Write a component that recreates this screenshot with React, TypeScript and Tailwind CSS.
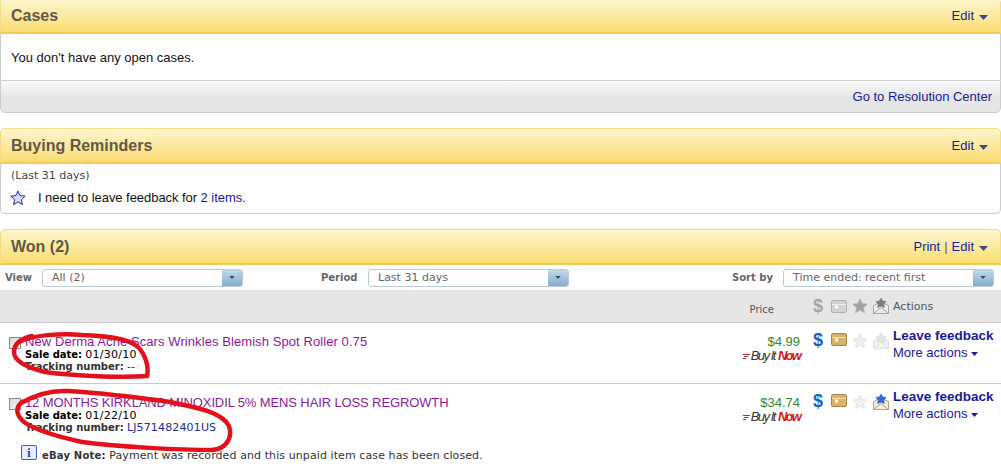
const arial = "font-['Liberation_Sans',Arial,sans-serif]";
const verdana = "font-['DejaVu_Sans',Verdana,sans-serif]";

function Caret({ className = "" }: { className?: string }) {
  return (
    <svg width="9" height="5" viewBox="0 0 9 5" className={className}>
      <path d="M0 0h9L4.5 5z" fill="currentColor" />
    </svg>
  );
}

function PanelHeader({ title, print }: { title: string; print?: boolean }) {
  return (
    <div className="flex h-[36px] items-center justify-between rounded-t-[5px] border border-b-2 border-[#f5dc84] border-b-[#efca58] bg-gradient-to-b from-[#fdf5cc] to-[#fbdd70] pt-[1px] pr-[12px] pl-[10px]">
      <h2 className="text-base font-bold text-[#5f5a48]">{title}</h2>
      <div className="flex items-center text-[13px] text-[#1a1a9c]">
        {print && (
          <>
            <span>Print</span>
            <span className="mx-[4px] text-[#5f5a48]">|</span>
          </>
        )}
        <span>Edit</span>
        <Caret className="mt-[2px] ml-[5px] text-[#44448c]" />
      </div>
    </div>
  );
}

function Star({ fill, stroke }: { fill: string; stroke: string }) {
  return (
    <svg width="16" height="16" viewBox="0 0 16 16" className="shrink-0">
      <path
        d="M8 1l2.100 4.600 5 .6-3.700 3.400 1 5L8 11.900 3.600 14.600l1-5L.9 6.200l5-.6z"
        fill={fill}
        stroke={stroke}
        strokeLinejoin="round"
      />
    </svg>
  );
}

function BoxIcon({ gray }: { gray?: boolean }) {
  return (
    <svg width="16" height="13" viewBox="0 0 16 13" className="shrink-0">
      <rect x=".5" y=".5" width="15" height="12" rx="1.500" fill={gray ? "#d2d2d2" : "#d9b36a"} stroke={gray ? "#b0b0b0" : "#a98443"} />
      <path d="M1 4.500h14" stroke={gray ? "#f0f0f0" : "#f2dca8"} />
      <path d="M4 5.500h3v3H4z" fill="#fff" />
    </svg>
  );
}

function MailStar({ fill, stroke, body, edge }: { fill: string; stroke: string; body: string; edge: string }) {
  return (
    <svg width="16" height="16" viewBox="0 0 16 16" className="shrink-0">
      <path d="M.5 7.500L8 4l7.500 3.500v8H.5z" fill={body} stroke={edge} />
      <path d="M3 3.500l3.300-.4L8 .2l1.700 2.900 3.300.4-2.300 2.600.6 3.300L8 8 4.700 9.400l.6-3.300z" fill={fill} stroke={stroke} strokeWidth=".7" />
      <path d="M.5 15.500L8 9.500l7.500 6" fill="none" stroke={edge} />
    </svg>
  );
}

function Select({ label, value, labelW, width, className = "" }: { label: string; value: string; labelW: string; width: string; className?: string }) {
  return (
    <div className={`flex items-center ${className}`}>
      <span className={`${verdana} ${labelW} text-[10px] font-bold text-[#666]`}>{label}</span>
      <div className={`${width} flex h-[18px] items-stretch overflow-hidden rounded-[3px] border border-[#bcc8d6] bg-white`}>
        <span className={`${verdana} flex-1 pl-[9px] text-[11px] leading-[16px] text-[#666]`}>{value}</span>
        <span className="flex w-5 items-center justify-center bg-gradient-to-b from-[#c4d8e8] to-[#82add0] text-[#3c4a5c]">
          <Caret className="h-[3px] w-[6px]" />
        </span>
      </div>
    </div>
  );
}

function BuyItNow() {
  return (
    <div className={`${arial} flex items-center justify-end text-[13px] leading-[14px] italic`}>
      <span className="mr-[1px] flex flex-col gap-[1px]">
        <span className="h-px w-[7px] bg-[#b02525]" />
        <span className="ml-[1px] h-px w-[4px] bg-[#b02525]" />
        <span className="h-px w-[3px] bg-[#b02525]" />
      </span>
      <span className="tracking-[-1.500px] text-[#333]">Buy It</span>
      <span className="ml-[3px] font-bold tracking-[-1.800px] text-[#d31717]">Now</span>
    </div>
  );
}

type Order = {
  title: string;
  titleTracking: string;
  date: string;
  tracking: string;
  price: string;
  done?: boolean;
  note?: boolean;
  height: string;
};

const orders: Order[] = [
  { title: "New Derma Acne Scars Wrinkles Blemish Spot Roller 0.75", titleTracking: "tracking-[.08px]", date: "01/30/10", tracking: "--", price: "$4.99", height: "h-[61px]" },
  { title: "12 MONTHS KIRKLAND MINOXIDIL 5% MENS HAIR LOSS REGROWTH", titleTracking: "tracking-[-.12px]", date: "01/22/10", tracking: "LJ571482401US", price: "$34.74", done: true, note: true, height: "h-[88px]" },
];

function OrderRow({ order }: { order: Order }) {
  return (
    <div className={`${order.height} border-b border-[#ccc] pt-[4px] last:border-b-0`}>
      <div className="flex items-start">
        <span className="mt-[10px] ml-[9px] h-[12px] w-[12px] shrink-0 border border-[#8a8a8a] bg-gradient-to-br from-[#d8d8d8] to-[#f8f8f8]" />
        <div className="ml-[4px] flex-1 pt-[7px]">
          <div className={`text-[13px] leading-[15px] ${order.titleTracking} text-[#8b1a9b]`}>{order.title}</div>
          <div className={`${verdana} text-[10px] leading-[12px] text-black`}>
            <div>
              <b>Sale date:</b> <span className="text-[11px] tracking-[.25px]">{order.date}</span>
            </div>
            <div className="text-[#333]">
              <b>Tracking number:</b>{" "}
              <span className={`text-[11px] tracking-[.15px] ${order.tracking === "--" ? "" : "text-[#1a2ca0]"}`}>{order.tracking}</span>
            </div>
          </div>
        </div>
        <div className="w-[92px] pt-[7px] text-right">
          <div className="text-[13px] leading-[15px] text-[#2b8a2b]">{order.price}</div>
          <BuyItNow />
        </div>
        <div className="ml-[13px] flex w-[80px] items-start pt-[5px]">
          <span className="w-[10px] text-center text-[18px] leading-[17px] font-bold text-[#1f5fc4]">$</span>
          <span className="mt-[1px] ml-[8px] flex">
            <BoxIcon />
          </span>
          <span className="mt-[1px] ml-[5px] flex">
            <Star fill="#efefef" stroke="#e2e2e2" />
          </span>
          <span className="mt-[1px] ml-[5px] flex">
            {order.done ? (
              <MailStar fill="#2f6fd0" stroke="#1f55b5" body="#f4eed8" edge="#a5a58c" />
            ) : (
              <MailStar fill="#e6e6e6" stroke="#d6d6d6" body="#f2f2f2" edge="#e2e2e2" />
            )}
          </span>
        </div>
        <div className="w-[108px]">
          <div className="text-[13.500px] leading-[17px] font-bold text-[#1a1a9c]">Leave feedback</div>
          <div className="flex items-center text-[13px] leading-[17px] text-[#1a1a9c]">
            More actions
            <Caret className="mt-[2px] ml-[4px] h-[4px] w-[7px] text-[#1a1a9c]" />
          </div>
        </div>
      </div>
      {order.note && (
        <div className="mt-[11px] ml-[21px] flex items-start gap-[5px]">
          <span className="flex h-[15px] w-[16px] items-center justify-center rounded-[2px] border border-[#3a5fc0] bg-[#e6eefb] font-['Liberation_Serif',serif] text-xs font-bold text-[#1f3fa8]">i</span>
          <span className={`${verdana} mt-[4px] text-[11px] leading-[14px] tracking-[.09px] text-[#333]`}>
            <b className="text-[10px] tracking-[.2px]">eBay Note:</b> Payment was recorded and this unpaid item case has been closed.
          </span>
        </div>
      )}
    </div>
  );
}

export default function App() {
  return (
    <div className={`${arial} relative h-[472px] w-[1001px] overflow-hidden bg-white`}>
      <section className="mt-[-2px] mb-[15px]">
        <PanelHeader title="Cases" />
        <div className="flex h-[46px] items-center border-x border-[#ccc] pt-[1px] pl-[10px] text-[13px] text-[#111]">
          You don&apos;t have any open cases.
        </div>
        <div className="flex h-[33px] items-center justify-end rounded-b-[5px] border border-[#ccc] bg-gradient-to-b from-[#fafafa] via-[#e6e6e6] to-[#e6e6e6] pt-[1px] pr-2 text-[13px] text-[#1a1a9c]">
          Go to Resolution Center
        </div>
      </section>

      <section className="mb-[15px]">
        <PanelHeader title="Buying Reminders" />
        <div className="h-[50px] rounded-b-[5px] border border-t-0 border-[#ccc] pl-[9px]">
          <div className={`${verdana} pt-[6px] pl-[1px] text-[11px] leading-[12px] text-[#444]`}>(Last 31 days)</div>
          <div className="mt-[6px] flex items-center text-[13px] tracking-[-.05px] text-[#111]">
            <Star fill="#dcdcf8" stroke="#2222bb" />
            <span className="ml-[12px]">I need to leave feedback for <span className="text-[#1a1a9c]">2 items.</span></span>
          </div>
        </div>
      </section>

      <section>
        <PanelHeader title="Won (2)" print />
        <div className="flex h-[25px] items-center pr-[7px] pl-[5px]">
          <Select label="View" value="All (2)" labelW="w-[37px]" width="w-[201px]" />
          <Select label="Period" value="Last 31 days" labelW="w-[47px]" width="w-[201px]" className="ml-[78px]" />
          <Select label="Sort by" value="Time ended: recent first" labelW="w-[51px]" width="w-[211px]" className="ml-auto" />
        </div>
        <div className="flex h-[33px] items-center border-b border-[#ccc] bg-[#e6e6e6]">
          <div className="flex-1" />
          <span className={`${verdana} mt-[7px] mr-[39px] text-[10px] text-[#555]`}>Price</span>
          <div className="flex w-[80px] items-center">
            <span className="w-[10px] text-center text-[18px] leading-[17px] font-bold text-[#a5a5a5]">$</span>
            <span className="ml-[8px] flex">
              <BoxIcon gray />
            </span>
            <span className="ml-[5px] flex">
              <Star fill="#a0a0a0" stroke="#b5b5b5" />
            </span>
            <span className="ml-[5px] flex">
              <MailStar fill="#808080" stroke="#777" body="#ececec" edge="#a5a5a5" />
            </span>
          </div>
          <span className={`${verdana} mt-[2px] w-[108px] text-[11px] leading-[14px] text-[#555]`}>Actions</span>
        </div>
        {orders.map((order) => (
          <OrderRow key={order.title} order={order} />
        ))}
      </section>

      {/* red marker scribbles drawn over the page */}
      <svg className="pointer-events-none absolute top-0 left-0" width="1001" height="472" viewBox="0 0 1001 472">
        <path
          d="M19 342C32 335 62 333 82 335C106 336 128 338 138 347C146 355 149 368 147 376C120 378 75 376 45 372C25 367 14 360 14 352C14 345 20 339 32 336"
          fill="none"
          stroke="#e3101c"
          strokeWidth="4.500"
          strokeLinecap="round"
        />
        <path
          d="M21 403C35 395 50 390 68 391C100 393 135 397 170 402C195 407 222 412 229 426C233 438 226 449 212 450C180 450 120 447 82 442C55 436 35 430 24 422C16 415 15 408 22 402"
          fill="none"
          stroke="#e3101c"
          strokeWidth="4.500"
          strokeLinecap="round"
        />
      </svg>
    </div>
  );
}
